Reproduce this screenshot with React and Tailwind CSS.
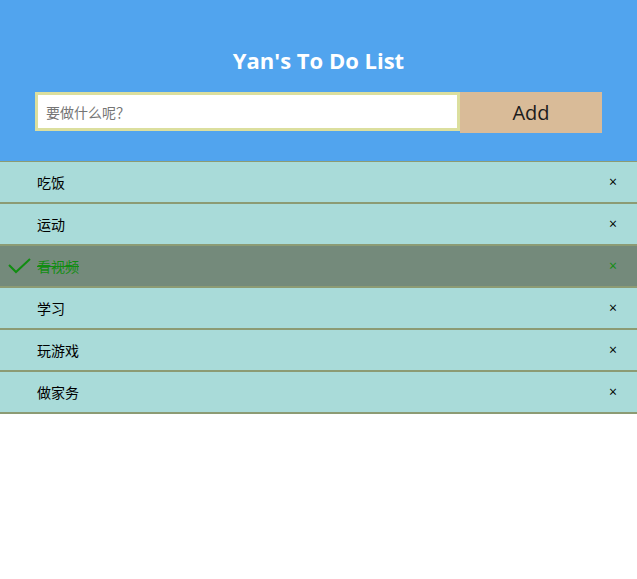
import React, { useState } from "react";

const initialTodos = [
  { id: 1, text: "吃饭", done: false },
  { id: 2, text: "运动", done: false },
  { id: 3, text: "看视频", done: true },
  { id: 4, text: "学习", done: false },
  { id: 5, text: "玩游戏", done: false },
  { id: 6, text: "做家务", done: false },
];

const font = { fontFamily: '"Open Sans", "Noto Sans CJK SC", sans-serif' };

function Check() {
  return (
    <svg width="24" height="18" viewBox="0 0 24 18" className="absolute left-[8px] top-[12px]">
      <path d="M1 7 L8 14 L22 1" fill="none" stroke="#118d11" strokeWidth="2" />
    </svg>
  );
}

export default function App() {
  const [todos, setTodos] = useState(initialTodos);
  const [value, setValue] = useState("");

  const add = () => {
    if (!value.trim()) return;
    setTodos([...todos, { id: Date.now(), text: value, done: false }]);
    setValue("");
  };

  return (
    <div className="w-[637px] min-h-[579px] bg-white" style={font}>
      {/* Header */}
      <div className="h-[162px] border-b border-[#8c9b74] bg-[#51a4ee] pt-[44px]">
        <h1 className="text-center text-[22px] font-bold leading-[32px] text-white">Yan's To Do List</h1>
        <div className="mx-auto mt-[16px] flex w-[567px] items-start">
          <input
            value={value}
            onChange={(e) => setValue(e.target.value)}
            placeholder="要做什么呢？"
            className="h-[39px] w-[425px] border-[3px] border-[#dcdf9e] bg-white px-[8px] text-[14px] text-black outline-none placeholder:text-[#757575]"
            style={{ fontFamily: '"Noto Sans CJK SC", sans-serif' }}
          />
          <button
            onClick={add}
            className="h-[41px] w-[142px] bg-[#d9bb98] text-[20px] text-[#1c1c1c]"
          >
            Add
          </button>
        </div>
      </div>

      {/* List */}
      <ul>
        {todos.map((t) => (
          <li
            key={t.id}
            onClick={() => setTodos(todos.map((x) => (x.id === t.id ? { ...x, done: !x.done } : x)))}
            className={`relative flex h-[42px] items-center border-b-2 border-[#8c9b74] pl-[37px] pr-[20px] text-[14px] ${
              t.done ? "bg-[#748a7b] text-[#118d11]" : "bg-[#a9dbd9] text-black"
            }`}
          >
            {t.done && <Check />}
            <span className={`flex-1 ${t.done ? "line-through" : ""}`}>{t.text}</span>
            <span
              onClick={(e) => {
                e.stopPropagation();
                setTodos(todos.filter((x) => x.id !== t.id));
              }}
              className="text-[14px] leading-none"
            >
              ×
            </span>
          </li>
        ))}
      </ul>
    </div>
  );
}
